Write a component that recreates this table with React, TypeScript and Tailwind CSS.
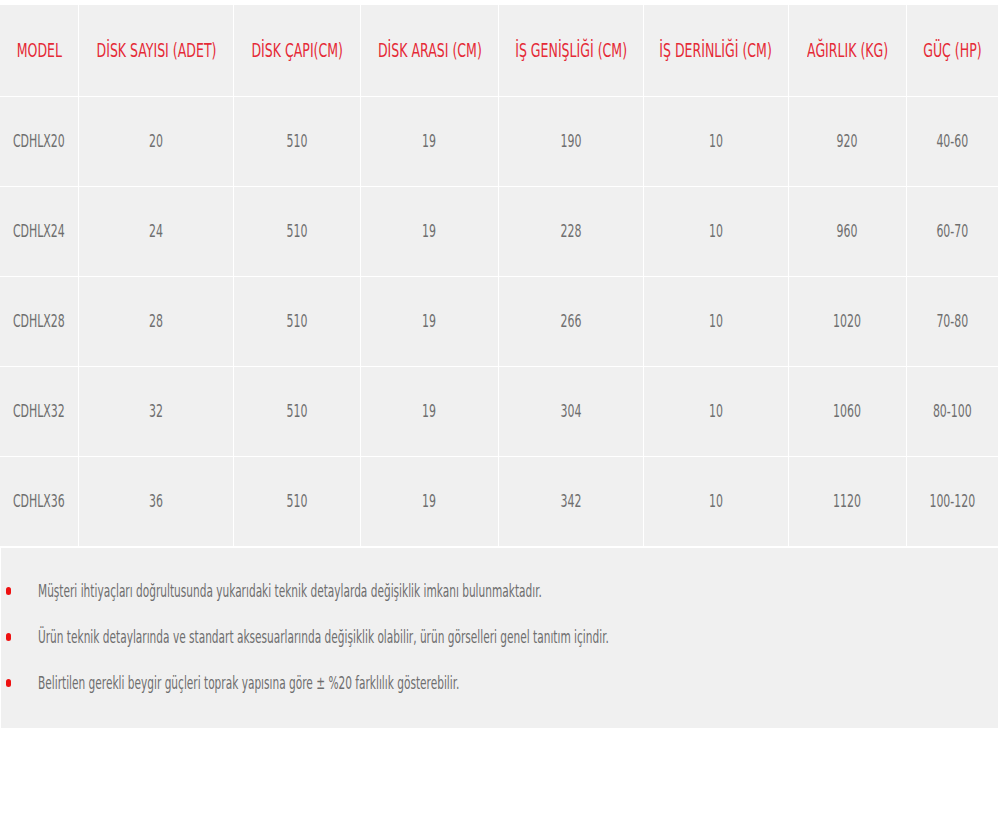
const headers = [
  'MODEL',
  'DİSK SAYISI (ADET)',
  'DİSK ÇAPI(CM)',
  'DİSK ARASI (CM)',
  'İŞ GENİŞLİĞİ (CM)',
  'İŞ DERİNLİĞİ (CM)',
  'AĞIRLIK (KG)',
  'GÜÇ (HP)',
]

const rows = [
  ['CDHLX20', '20', '510', '19', '190', '10', '920', '40-60'],
  ['CDHLX24', '24', '510', '19', '228', '10', '960', '60-70'],
  ['CDHLX28', '28', '510', '19', '266', '10', '1020', '70-80'],
  ['CDHLX32', '32', '510', '19', '304', '10', '1060', '80-100'],
  ['CDHLX36', '36', '510', '19', '342', '10', '1120', '100-120'],
]

const notes = [
  'Müşteri ihtiyaçları doğrultusunda yukarıdaki teknik detaylarda değişiklik imkanı bulunmaktadır.',
  'Ürün teknik detaylarında ve standart aksesuarlarında değişiklik olabilir, ürün görselleri genel tanıtım içindir.',
  'Belirtilen gerekli beygir güçleri toprak yapısına göre ± %20 farklılık gösterebilir.',
]

const font = "font-['DejaVu_Sans_Condensed',sans-serif]"

export default function App() {
  return (
    <div className={`bg-white w-[1001px] min-h-[821px] pt-[5px] ${font}`}>
      <div className="w-[998px] grid grid-cols-[78px_154px_126px_137px_144px_144px_117px_91px] gap-x-px gap-y-px bg-white">
        {headers.map((h) => (
          <div key={h} className="h-[91px] bg-[#f0f0f0] flex items-center justify-center">
            <span className="inline-block text-[15px] text-[#e52a36] scale-x-[0.93] scale-y-[1.35] whitespace-nowrap">{h}</span>
          </div>
        ))}
        {rows.map((r) =>
          r.map((c, i) => (
            <div key={r[0] + i} className="h-[89px] bg-[#f0f0f0] flex items-center justify-center">
              <span className="inline-block text-[14px] text-[#6e6e6e] scale-x-[0.87] scale-y-[1.25]">{c}</span>
            </div>
          ))
        )}
      </div>
      <ul className="mt-[2px] ml-px w-[997px] bg-[#f0f0f0] pt-[20px] pb-[22px]">
        {notes.map((n) => (
          <li key={n} className="h-[46px] flex items-center">
            <span className="ml-[5px] w-[5px] h-[8px] rounded-full bg-[#ee1111]" />
            <span className="ml-[27px] inline-block text-[14px] text-[#6e6e6e] scale-x-[0.84] scale-y-[1.25] origin-left whitespace-nowrap">{n}</span>
          </li>
        ))}
      </ul>
    </div>
  )
}
